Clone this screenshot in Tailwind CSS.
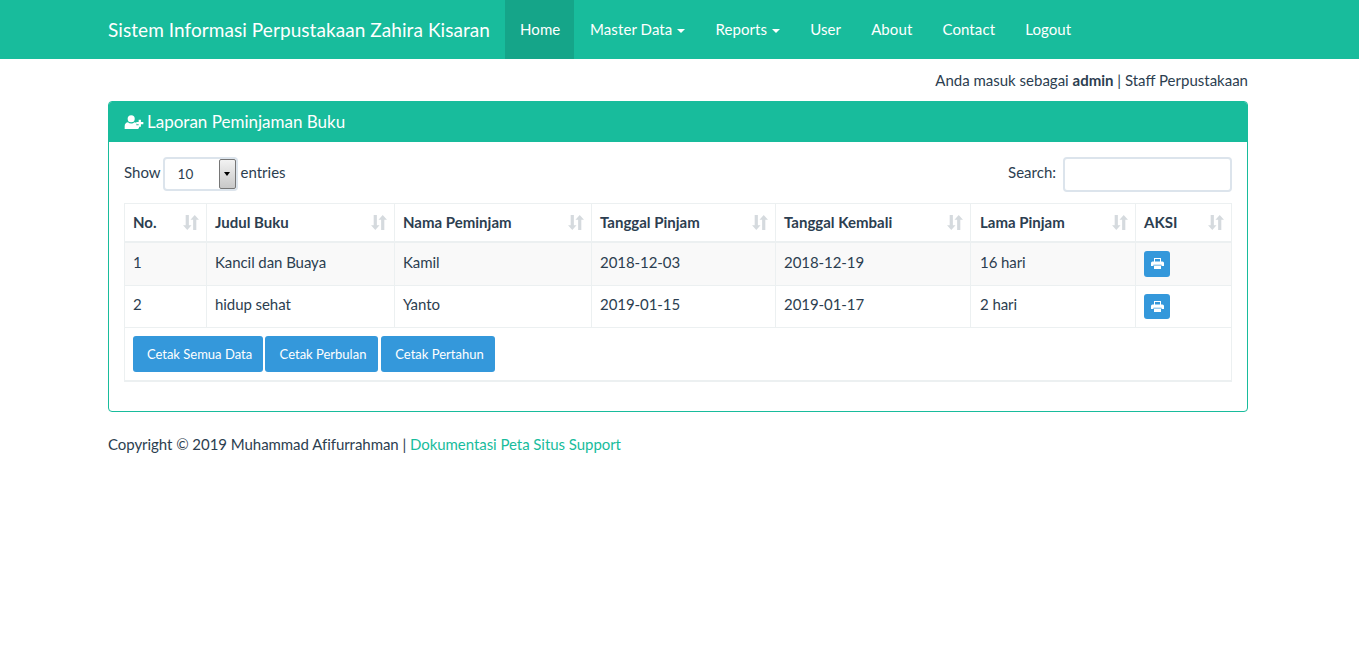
<!DOCTYPE html>
<html><head><meta charset="utf-8"><script src="https://cdn.jsdelivr.net/npm/@tailwindcss/browser@4"></script></head>
<body class="font-['Lato',sans-serif] text-[15px] leading-[21.43px] text-[#2c3e50] bg-white">
<nav class="h-[59px] bg-[#18bc9c] text-white">
  <div class="w-[1140px] ml-[108px] flex h-full tracking-[0.1px]">
    <a class="text-[19px] leading-[59px] w-[397px] whitespace-nowrap tracking-[0.07px]">Sistem Informasi Perpustakaan Zahira Kisaran</a>
    <a class="w-[69px] px-[15px] leading-[59px] bg-[#15a589]">Home</a>
    <a class="pl-[16px] pr-[15px] leading-[59px] flex items-center gap-[5px]">Master Data <span class="w-0 h-0 border-x-4 border-x-transparent border-t-4 border-t-white mt-[2px]"></span></a>
    <a class="px-[15px] leading-[59px] flex items-center gap-[5px]">Reports <span class="w-0 h-0 border-x-4 border-x-transparent border-t-4 border-t-white mt-[2px]"></span></a>
    <a class="px-[15px] leading-[59px]">User</a>
    <a class="px-[15px] leading-[59px]">About</a>
    <a class="px-[15px] leading-[59px]">Contact</a>
    <a class="px-[15px] leading-[59px]">Logout</a>
  </div>
</nav>
<main class="w-[1140px] ml-[108px]">
  <p class="text-right pt-[11px] h-[42px]">Anda masuk sebagai <b>admin</b> | Staff Perpustakaan</p>
  <section class="border border-[#18bc9c] rounded-[4px] h-[311px]">
    <h3 class="h-[40px] bg-[#18bc9c] text-white text-[17px] leading-[40px] px-[15px] flex items-center gap-[3px] rounded-t-[3px]">
      <svg class="w-[20px] h-[14px]" viewBox="0 0 20 15" fill="#fff"><circle cx="7" cy="4" r="3.8"/><path d="M0 15v-3c0-2.500 1.500-4 3.500-4.200 1 .9 2.200 1.400 3.500 1.400s2.500-.5 3.500-1.400c.8.1 1.500.4 2 .9v2.300h3v2.500l-1 1.500z"/><path d="M15 5h2.400v2.600H20V10h-2.600v2.600H15V10h-2.600V7.600H15z"/></svg>
      Laporan Peminjaman Buku
    </h3>
    <div class="px-[15px] pt-[15px]">
      <div class="flex justify-between items-start h-[36px]">
        <div class="flex items-start">
          <span class="mt-[5px]">Show</span>
          <div class="ml-[2px] mr-[3px] w-[75px] h-[34px] border-2 border-[#dce4ec] rounded-[4px] flex items-center justify-between pl-[13px] text-[13.5px]">
            <span class="mt-[2px]">10</span>
            <span class="w-[17px] h-[30px] border border-[#767676] rounded-[2px] bg-gradient-to-b from-[#f2f2f2] to-[#c8c8c8] flex items-center justify-center"><span class="w-0 h-0 border-x-[3.5px] border-x-transparent border-t-4 border-t-black"></span></span>
          </div>
          <span class="mt-[5px]">entries</span>
        </div>
        <div class="flex items-start gap-[7px]">
          <span class="mt-[5px]">Search:</span>
          <div class="w-[169px] h-[35px] border-2 border-[#dce4ec] rounded-[4px]"></div>
        </div>
      </div>
      <table class="mt-[10px] w-[1107px] table-fixed border-collapse border border-[#ecf0f1]">
        <colgroup><col class="w-[82px]"><col class="w-[188px]"><col class="w-[197px]"><col class="w-[184px]"><col class="w-[195px]"><col class="w-[165px]"><col class="w-[96px]"></colgroup>
        <thead>
          <tr class="h-[38px] border-b-2 border-[#ecf0f1] font-bold text-left">
            <th class="border-x border-[#ecf0f1] pl-2 pr-[7px]"><div class="flex justify-between items-center"><span>No.</span><svg class="w-[16px] h-[17px]" viewBox="0 0 15 16" fill="#d5dade"><path d="M2.500 1h3v9.500H8L4 15 0 10.500h2.500z"/><path d="M9.500 15h3V5.500H15L11 1 7 5.500h2.500z"/></svg></div></th>
            <th class="border-x border-[#ecf0f1] pl-2 pr-[7px]"><div class="flex justify-between items-center"><span>Judul Buku</span><svg class="w-[16px] h-[17px]" viewBox="0 0 15 16" fill="#d5dade"><path d="M2.500 1h3v9.500H8L4 15 0 10.500h2.500z"/><path d="M9.500 15h3V5.500H15L11 1 7 5.500h2.500z"/></svg></div></th>
            <th class="border-x border-[#ecf0f1] pl-2 pr-[7px]"><div class="flex justify-between items-center"><span>Nama Peminjam</span><svg class="w-[16px] h-[17px]" viewBox="0 0 15 16" fill="#d5dade"><path d="M2.500 1h3v9.500H8L4 15 0 10.500h2.500z"/><path d="M9.500 15h3V5.500H15L11 1 7 5.500h2.500z"/></svg></div></th>
            <th class="border-x border-[#ecf0f1] pl-2 pr-[7px]"><div class="flex justify-between items-center"><span>Tanggal Pinjam</span><svg class="w-[16px] h-[17px]" viewBox="0 0 15 16" fill="#d5dade"><path d="M2.500 1h3v9.500H8L4 15 0 10.500h2.500z"/><path d="M9.500 15h3V5.500H15L11 1 7 5.500h2.500z"/></svg></div></th>
            <th class="border-x border-[#ecf0f1] pl-2 pr-[7px]"><div class="flex justify-between items-center"><span>Tanggal Kembali</span><svg class="w-[16px] h-[17px]" viewBox="0 0 15 16" fill="#d5dade"><path d="M2.500 1h3v9.500H8L4 15 0 10.500h2.500z"/><path d="M9.500 15h3V5.500H15L11 1 7 5.500h2.500z"/></svg></div></th>
            <th class="border-x border-[#ecf0f1] pl-[9px] pr-[7px]"><div class="flex justify-between items-center"><span>Lama Pinjam</span><svg class="w-[16px] h-[17px]" viewBox="0 0 15 16" fill="#d5dade"><path d="M2.500 1h3v9.500H8L4 15 0 10.500h2.500z"/><path d="M9.500 15h3V5.500H15L11 1 7 5.500h2.500z"/></svg></div></th>
            <th class="border-x border-[#ecf0f1] pl-2 pr-[7px]"><div class="flex justify-between items-center"><span>AKSI</span><svg class="w-[16px] h-[17px]" viewBox="0 0 15 16" fill="#d5dade"><path d="M2.500 1h3v9.500H8L4 15 0 10.500h2.500z"/><path d="M9.500 15h3V5.500H15L11 1 7 5.500h2.500z"/></svg></div></th>
          </tr>
        </thead>
        <tbody class="tracking-[-0.07px]">
          <tr class="h-[44px] bg-[#f9f9f9] border-b border-[#ecf0f1]">
            <td class="border-x border-[#ecf0f1] px-2 pb-[3px]">1</td><td class="border-x border-[#ecf0f1] pl-2 pb-[3px]">Kancil dan Buaya</td><td class="border-x border-[#ecf0f1] px-2 pb-[3px]">Kamil</td><td class="border-x border-[#ecf0f1] px-2 pb-[3px]">2018-12-03</td><td class="border-x border-[#ecf0f1] px-2 pb-[3px]">2018-12-19</td><td class="border-x border-[#ecf0f1] pl-[9px] pb-[3px]">16 hari</td>
            <td class="border-x border-[#ecf0f1] px-2"><span class="w-[26px] h-[26px] bg-[#3498db] rounded-[3px] flex items-center justify-center"><svg class="w-[13px] h-[11px]" viewBox="0 0 13 11" fill="#fff"><path d="M3 0h7v4H9V1H4v3H3z"/><path d="M1.500 3.500h10A1.500 1.500 0 0 1 13 5v3h-2.500V6.800h-8V8H0V5a1.500 1.500 0 0 1 1.500-1.500z"/><path d="M3 7.500h7V11H3z"/></svg></span></td>
          </tr>
          <tr class="h-[42px] border-b border-[#ecf0f1]">
            <td class="border-x border-[#ecf0f1] px-2 pb-[3px]">2</td><td class="border-x border-[#ecf0f1] pl-2 pb-[3px]">hidup sehat</td><td class="border-x border-[#ecf0f1] px-2 pb-[3px]">Yanto</td><td class="border-x border-[#ecf0f1] px-2 pb-[3px]">2019-01-15</td><td class="border-x border-[#ecf0f1] px-2 pb-[3px]">2019-01-17</td><td class="border-x border-[#ecf0f1] pl-[9px] pb-[3px]">2 hari</td>
            <td class="border-x border-[#ecf0f1] px-2"><span class="w-[26px] h-[25px] bg-[#3498db] rounded-[3px] flex items-center justify-center"><svg class="w-[13px] h-[11px]" viewBox="0 0 13 11" fill="#fff"><path d="M3 0h7v4H9V1H4v3H3z"/><path d="M1.500 3.500h10A1.500 1.500 0 0 1 13 5v3h-2.500V6.800h-8V8H0V5a1.500 1.500 0 0 1 1.500-1.500z"/><path d="M3 7.500h7V11H3z"/></svg></span></td>
          </tr>
          <tr class="h-[53px] border-b-2 border-[#ecf0f1]">
            <td colspan="7" class="px-2">
              <div class="flex text-white text-[13px] tracking-normal">
                <a class="w-[130px] h-[36px] pl-[3px] pt-[1px] bg-[#3498db] rounded-[3px] flex items-center justify-center mr-[2px]">Cetak Semua Data</a>
                <a class="w-[113px] h-[36px] pl-[3px] pt-[1px] bg-[#3498db] rounded-[3px] flex items-center justify-center mr-[3px]">Cetak Perbulan</a>
                <a class="w-[114px] h-[36px] pl-[3px] pt-[1px] bg-[#3498db] rounded-[3px] flex items-center justify-center">Cetak Pertahun</a>
              </div>
            </td>
          </tr>
        </tbody>
      </table>
    </div>
  </section>
  <p class="mt-[22px] tracking-[-0.05px]">Copyright © 2019 Muhammad Afifurrahman | <a class="text-[#18bc9c]">Dokumentasi Peta Situs Support</a></p>
</main>
</body></html>
